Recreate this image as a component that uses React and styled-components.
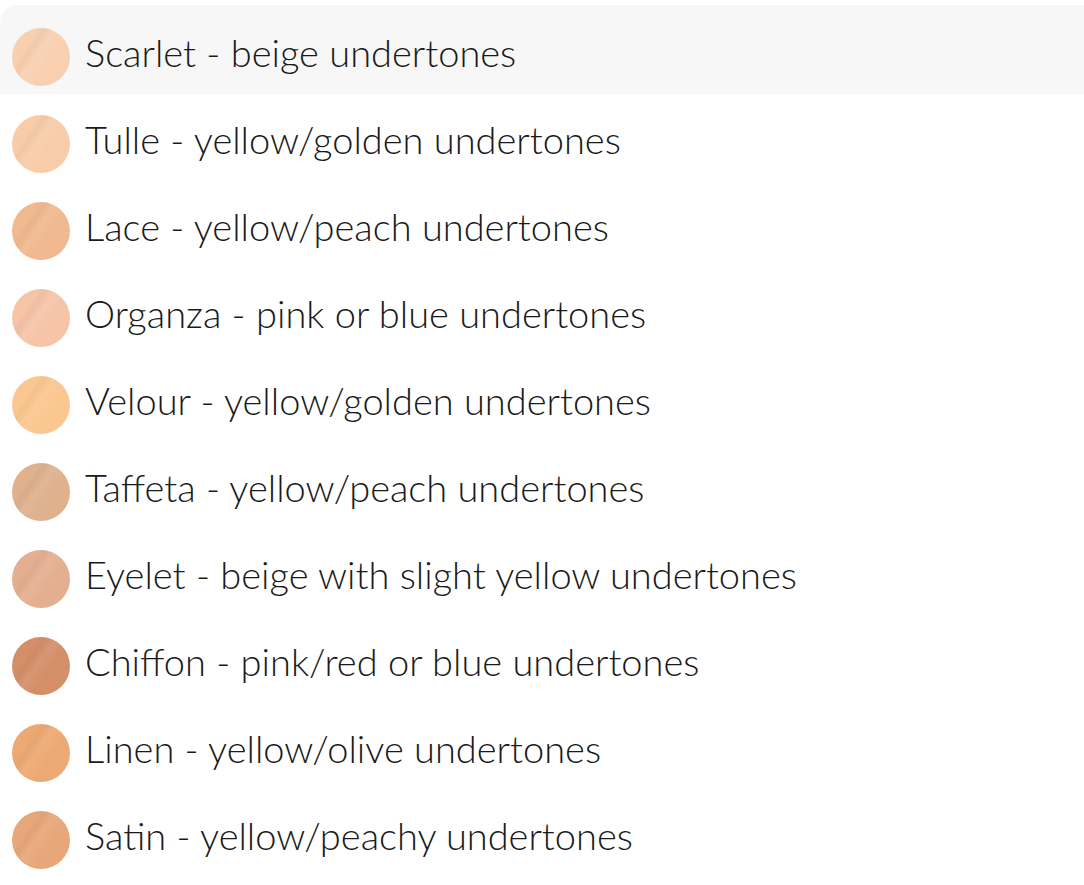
import React from 'react';
import styled, { createGlobalStyle } from 'styled-components';

const GlobalStyle = createGlobalStyle`
  body {
    margin: 0;
    background: #fff;
    font-family: "Lato", "Open Sans", sans-serif;
  }
`;

const List = styled.ul`
  list-style: none;
  margin: 0;
  padding: 5px 0 0;
  width: 1084px;
`;

const Row = styled.li`
  display: flex;
  align-items: flex-start;
  gap: 15px;
  height: ${p => (p.$active ? '89px' : '87px')};
  box-sizing: border-box;
  padding: ${p => (p.$active ? '23px' : '21px')} 0 0 12px;
  background: ${p => (p.$active ? '#f7f7f7' : 'transparent')};
  border-radius: ${p => (p.$active ? '18px 0 0 0' : '0')};
`;

const Swatch = styled.span`
  flex: none;
  width: 58px;
  height: 58px;
  border-radius: 50%;
  background-color: ${p => p.$color};
  background-image: linear-gradient(
    125deg,
    rgba(255, 255, 255, 0) 0%,
    rgba(255, 255, 255, 0) 28%,
    rgba(0, 0, 0, 0.03) 35%,
    rgba(255, 255, 255, 0.08) 45%,
    rgba(255, 255, 255, 0) 62%
  );
`;

const Label = styled.span`
  font-family: "Lato Light", "Lato", sans-serif;
  font-weight: 300;
  font-size: 38px;
  line-height: 48px;
  color: #1a1a1a;
  white-space: nowrap;
`;

const shades = [
  { name: 'Scarlet - beige undertones', color: '#f8d0b0' },
  { name: 'Tulle - yellow/golden undertones', color: '#f8cca8' },
  { name: 'Lace - yellow/peach undertones', color: '#f0b98f' },
  { name: 'Organza - pink or blue undertones', color: '#f6c4a7' },
  { name: 'Velour - yellow/golden undertones', color: '#fac790' },
  { name: 'Taffeta - yellow/peach undertones', color: '#dfb18d' },
  { name: 'Eyelet - beige with slight yellow undertones', color: '#e4af90' },
  { name: 'Chiffon - pink/red or blue undertones', color: '#d48e68' },
  { name: 'Linen - yellow/olive undertones', color: '#eda973' },
  { name: 'Satin - yellow/peachy undertones', color: '#e7a779' },
];

const App = () => {
  return (
    <>
      <GlobalStyle />
      <List>
        {shades.map((s, i) => (
          <Row key={s.name} $active={i === 0}>
            <Swatch $color={s.color} />
            <Label>{s.name}</Label>
          </Row>
        ))}
      </List>
    </>
  );
};

export default App;
